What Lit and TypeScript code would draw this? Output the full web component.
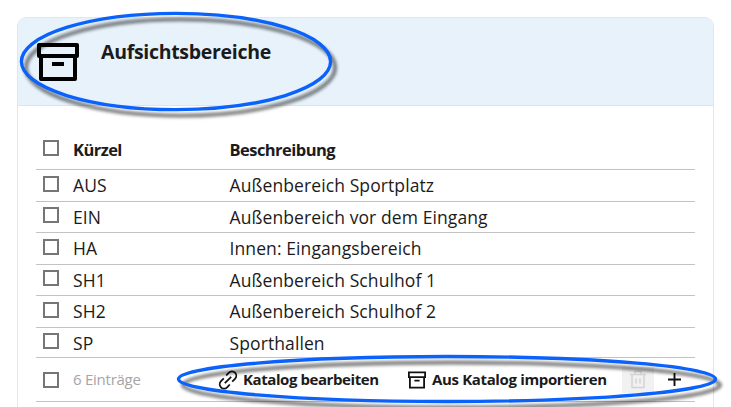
import { LitElement, html, css, svg } from "lit";
import { customElement } from "lit/decorators.js";

const archive = svg`<path fill="none" stroke="currentColor" stroke-width="4" stroke-linejoin="round" d="M2 2h38v11h-38zM4 13h34v23h-34z"/><path stroke="currentColor" stroke-width="4" d="M15 21h12"/>`;

interface Row { code: string; text: string; h: number; }

const rows: Row[] = [
  { code: "AUS", text: "Außenbereich Sportplatz", h: 32 },
  { code: "EIN", text: "Außenbereich vor dem Eingang", h: 31 },
  { code: "HA", text: "Innen: Eingangsbereich", h: 32 },
  { code: "SH1", text: "Außenbereich Schulhof 1", h: 31 },
  { code: "SH2", text: "Außenbereich Schulhof 2", h: 32 },
  { code: "SP", text: "Sporthallen", h: 30 },
];

@customElement("app-root")
export class AppRoot extends LitElement {
  static styles = css`
    :host { display: block; position: relative; width: 731px; height: 407px; overflow: hidden;
      background: #fff; color: #1b1b1b; font-family: "Open Sans", "Noto Sans", sans-serif; }
    * { box-sizing: border-box; }
    .card { margin: 17px 0 0 17px; width: 697px; height: 420px; border: 1px solid #e4e6e8;
      border-radius: 9px; overflow: hidden; }
    .head { height: 88px; background: #e7f2fb; border-bottom: 1px solid #dbe4ec; display: flex;
      align-items: flex-start; padding: 25px 0 0 19px; }
    .head svg { width: 42px; height: 38px; color: #000; flex: none; }
    h1 { margin: -5px 0 0 22px; font-size: 19.5px; line-height: 28px; font-weight: 700; letter-spacing: -0.3px; }
    .table { margin: 25px 18px 0; }
    .row { display: grid; grid-template-columns: 37px 156.5px 1fr; border-bottom: 1px solid #c3c3c3;
      font-size: 17.5px; line-height: 24px; white-space: nowrap; letter-spacing: 0.1px; }
    .row span { padding-top: 3px; }
    .row .box { margin: 6px 0 0 7px; }
    .row.even .box { margin-top: 5px; }
    .titles { height: 39px; font-size: 16.5px; font-weight: 700; letter-spacing: -0.55px; }
    .titles span { padding-top: 7px; }
    .titles .box { margin-top: 9px; }
    .box { width: 16px; height: 16px; border: 2px solid #767676; background: #fff; }
    .foot { display: flex; height: 44px; align-items: center; border-bottom: 1px solid #c3c3c3;
      font-size: 15px; font-weight: 700; white-space: nowrap; letter-spacing: -0.42px; }
    .foot .box { margin: 0 14px 0 7px; }
    .count { width: 145px; padding-bottom: 1px; font-size: 15px; font-weight: 400; color: #a5a5a5; letter-spacing: -0.25px; }
    .action { display: flex; align-items: center; }
    .action svg { width: 20px; height: 20px; margin-right: 5px; flex: none; }
    .action b { padding-bottom: 2px; font-weight: 700; }
    .edit { width: 189px; }
    .import { width: 215px; letter-spacing: -0.35px; }
    .trash { width: 32px; height: 26px; background: #f1f1f1; color: #d4d4d4; display: grid; place-items: center; }
    .plus { width: 13px; height: 13px; margin-left: 14px; }
    .marks { position: absolute; inset: 0; width: 731px; height: 407px; }
    .marks ellipse { fill: none; stroke: #0a62fa; stroke-width: 3.4; }
    .marks .shade { stroke: #000; stroke-opacity: 0.46; stroke-width: 4.4; filter: blur(1.6px); transform: translate(4.5px, 6px); }
  `;

  render() {
    return html`
      <main class="card">
        <header class="head">
          <svg viewBox="0 0 42 38">${archive}</svg>
          <h1>Aufsichtsbereiche</h1>
        </header>
        <section class="table">
          <div class="row titles"><i class="box"></i><span>Kürzel</span><span>Beschreibung</span></div>
          ${rows.map((r, i) => html`<div class="row ${i % 2 ? "even" : ""}" style="height:${r.h}px"><i class="box"></i><span>${r.code}</span><span>${r.text}</span></div>`)}
          <div class="foot">
            <i class="box"></i><span class="count">6 Einträge</span>
            <div class="action edit">
              <svg viewBox="0 0 20 20" fill="none" stroke="#111" stroke-width="1.8">
                <path d="M6.8 13.2l6.4-6.4M8.2 5.5l2.7-2.8a4.2 4.2 0 0 1 6.1 6.1L14.2 11.6M5.8 8.4L3 11.2a4.2 4.2 0 0 0 6.1 6.1l2.7-2.8"/>
              </svg><b>Katalog bearbeiten</b>
            </div>
            <div class="action import">
              <svg viewBox="0 0 20 20" fill="none" stroke="#111" stroke-width="1.8">
                <path d="M1.9 2.4h16.2v4.8h-16.2zM2.9 7.2v10.4h14.2v-10.4M7.4 10.7h5.2"/>
              </svg><b>Aus Katalog importieren</b>
            </div>
            <div class="trash">
              <svg width="18" height="19" viewBox="0 0 18 19" fill="none" stroke="currentColor" stroke-width="1.5">
                <path d="M1 4.5h16M6 4.5v-3h6v3M3 4.5v13h12v-13M7 8.5v5M11 8.5v5"/>
              </svg>
            </div>
            <svg class="plus" viewBox="0 0 13 13" stroke="#111" stroke-width="1.9"><path d="M6.5 0v13M0 6.5h13"/></svg>
          </div>
        </section>
      </main>
      <svg class="marks" viewBox="0 0 731 407">
        <ellipse class="shade" cx="176" cy="61.5" rx="154.6" ry="48.1"/>
        <ellipse cx="176" cy="61.5" rx="154.6" ry="48.1"/>
        <ellipse class="shade" cx="447" cy="379" rx="268.5" ry="22.5"/>
        <ellipse cx="447" cy="379" rx="268.5" ry="22.5"/>
      </svg>
    `;
  }
}
